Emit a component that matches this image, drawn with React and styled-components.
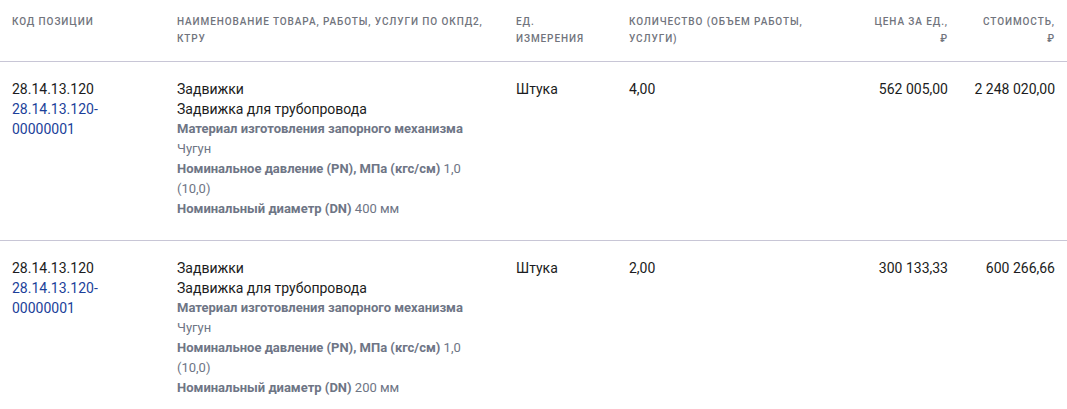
import styled, { createGlobalStyle } from "styled-components";

const GlobalStyle = createGlobalStyle`
  body {
    margin: 0;
    background: #fff;
    font-family: Roboto, "Liberation Sans", Arial, sans-serif;
    color: #1b1c21;
  }
`;

const columns = "165px 339px 113px 221px 98px 107px";

const Table = styled.div`
  width: 100%;
`;

const HeadRow = styled.div`
  display: grid;
  grid-template-columns: ${columns};
  padding: 13px 12px 14px;
  border-bottom: 1px solid #c8c6d6;
`;

const HeadCell = styled.div`
  font-size: 10px;
  font-weight: 500;
  letter-spacing: 0.9px;
  line-height: 17px;
  text-transform: uppercase;
  color: #71747d;
  text-align: ${(p) => (p.$right ? "right" : "left")};
  padding-right: ${(p) => (p.$right ? "0" : "20px")};
`;

const Row = styled.div`
  display: grid;
  grid-template-columns: ${columns};
  padding: 17px 12px 21px;
  border-bottom: 1px solid #c8c6d6;
  font-size: 14px;
  line-height: 20px;
`;

const Cell = styled.div`
  text-align: ${(p) => (p.$right ? "right" : "left")};
  padding-right: ${(p) => p.$pad || "0"};
`;

const Link = styled.a`
  color: #1c3f9a;
  text-decoration: none;
  display: block;
`;

const Attr = styled.div`
  font-size: 13px;
  line-height: 20px;
  color: #6e7585;
  b {
    font-weight: 700;
  }
`;

const rows = [
  { price: "562 005,00", qty: "4,00", total: "2 248 020,00", dn: "400 мм" },
  { price: "300 133,33", qty: "2,00", total: "600 266,66", dn: "200 мм" },
];

export default function App() {
  return (
    <>
      <GlobalStyle />
      <Table>
        <HeadRow>
          <HeadCell>Код позиции</HeadCell>
          <HeadCell>
            Наименование товара, работы, услуги по ОКПД2,
            <br />
            КТРУ
          </HeadCell>
          <HeadCell>
            Ед.
            <br />
            измерения
          </HeadCell>
          <HeadCell>
            Количество (объем работы,
            <br />
            услуги)
          </HeadCell>
          <HeadCell $right>
            Цена за ед.,
            <br />₽
          </HeadCell>
          <HeadCell $right>
            Стоимость,
            <br />₽
          </HeadCell>
        </HeadRow>
        {rows.map((r, i) => (
          <Row key={i}>
            <Cell $pad="30px">
              28.14.13.120
              <Link href="#">
                28.14.13.120-
                <br />
                00000001
              </Link>
            </Cell>
            <Cell $pad="39px">
              <div>Задвижки</div>
              <div>Задвижка для трубопровода</div>
              <Attr>
                <b>Материал изготовления запорного механизма</b>
              </Attr>
              <Attr>Чугун</Attr>
              <Attr>
                <b>Номинальное давление (PN), МПа (кгс/см)</b> 1,0
                <br />
                (10,0)
              </Attr>
              <Attr>
                <b>Номинальный диаметр (DN)</b> {r.dn}
              </Attr>
            </Cell>
            <Cell>Штука</Cell>
            <Cell>{r.qty}</Cell>
            <Cell $right>{r.price}</Cell>
            <Cell $right>{r.total}</Cell>
          </Row>
        ))}
      </Table>
    </>
  );
}
